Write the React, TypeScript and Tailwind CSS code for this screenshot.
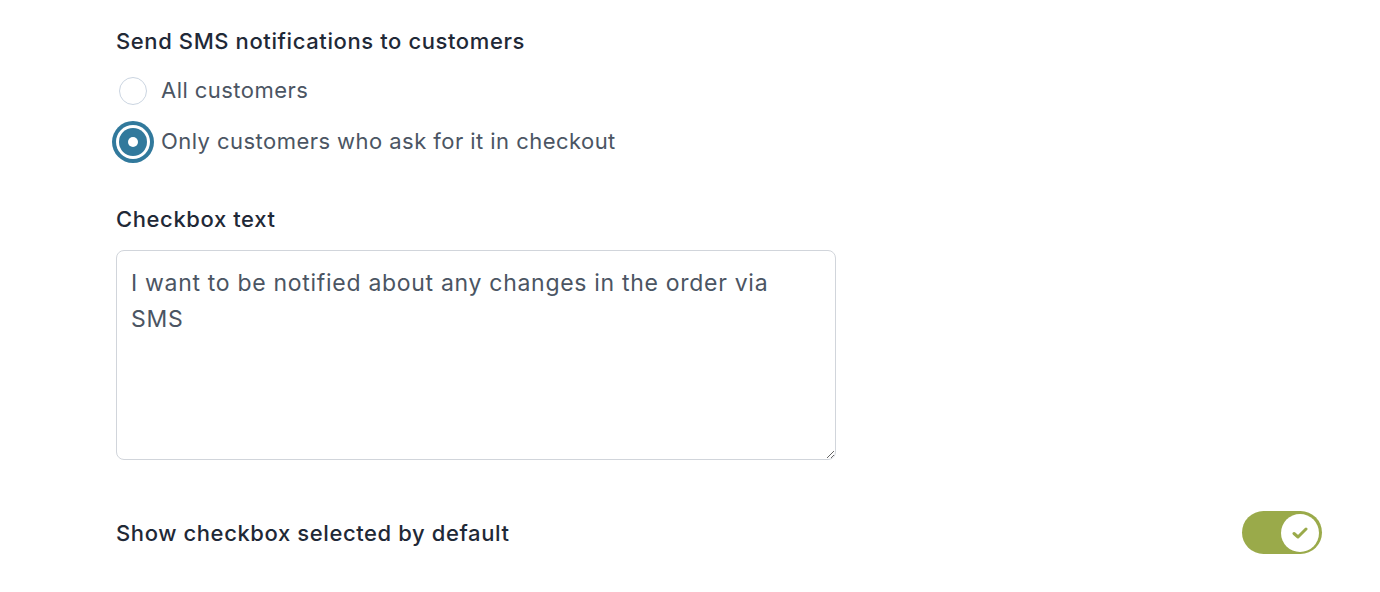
export default function App() {
  return (
    <div className="min-h-screen bg-white pl-[116px] pr-[58px] pt-[27px] font-['Inter',sans-serif]">
      <h2 className="text-[22px] leading-[28px] font-medium tracking-[0.6px] text-[#1f2937]">
        Send SMS notifications to customers
      </h2>

      {/* radio group */}
      <div className="mt-[10px]">
        <label className="flex items-center h-[51px] gap-[14px]">
          <span className="ml-[3px] w-[28px] h-[28px] rounded-full border border-[#cbd5e1] bg-white" />
          <span className="text-[22px] tracking-[0.45px] text-[#4b5563]">All customers</span>
        </label>
        <label className="flex items-center h-[51px] gap-[14px]">
          <span className="ml-[3px] w-[28px] h-[28px] rounded-full bg-[#31799c] ring-4 ring-[#31799c] ring-offset-[3px] ring-offset-white flex items-center justify-center">
            <span className="w-[10px] h-[10px] rounded-full bg-white" />
          </span>
          <span className="text-[22px] tracking-[0.45px] text-[#4b5563]">Only customers who ask for it in checkout</span>
        </label>
      </div>

      <div className="mt-[38px]">
        <div className="text-[22px] leading-[28px] font-medium tracking-[0.6px] text-[#1f2937]">Checkbox text</div>
        <textarea
          className="mt-[17px] block w-[720px] h-[210px] rounded-lg border border-[#d1d5db] pl-[14px] pr-[28px] pt-[14px] text-[23px] leading-[36px] tracking-[0.7px] text-[#4b5563] outline-none font-['Inter',sans-serif]"
          defaultValue="I want to be notified about any changes in the order via SMS"
        />
      </div>

      <div className="mt-[51px] flex items-center justify-between">
        <span className="text-[22px] leading-[28px] font-medium tracking-[0.6px] text-[#1f2937]">
          Show checkbox selected by default
        </span>
        <button className="w-[80px] h-[43px] rounded-full bg-[#9aaa4a] flex items-center justify-end pr-[3px]">
          <span className="w-[38px] h-[38px] rounded-full bg-white flex items-center justify-center">
            <svg width="16" height="12" viewBox="0 0 16 12" fill="none">
              <path d="M2 6.5 L6 10 L14 2" stroke="#9aaa4a" strokeWidth="3" strokeLinecap="round" strokeLinejoin="round" />
            </svg>
          </span>
        </button>
      </div>
    </div>
  );
}
